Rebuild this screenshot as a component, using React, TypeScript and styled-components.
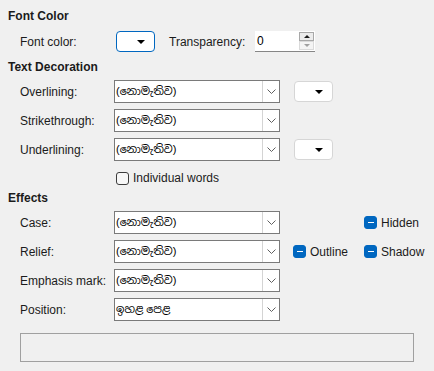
import React from 'react';
import styled, { createGlobalStyle } from 'styled-components';

const GlobalStyle = createGlobalStyle`
  html, body {
    margin: 0;
    padding: 0;
    background: #f0f0f0;
  }
`;

const Page = styled.div`
  width: 434px;
  height: 371px;
  box-sizing: border-box;
  padding: 8px 0 0 8px;
  background: #f0f0f0;
  font-family: 'Segoe UI', 'Liberation Sans', 'Noto Sans Sinhala', 'Noto Sans', sans-serif;
  font-size: 12px;
  color: #1b1b1b;
  overflow: hidden;
`;

const Title = styled.div<{ $top?: number }>`
  font-weight: 700;
  height: 17px;
  line-height: 17px;
  margin-top: ${(p) => p.$top ?? 0}px;
`;

const Rows = styled.div<{ $top?: number }>`
  display: flex;
  flex-direction: column;
  gap: 6px;
  margin-top: ${(p) => p.$top ?? 0}px;
`;

const Row = styled.div<{ $h?: number; $top?: number }>`
  display: flex;
  align-items: center;
  height: ${(p) => p.$h ?? 23}px;
  margin-top: ${(p) => p.$top ?? 0}px;
  padding-left: 12px;
`;

const Label = styled.span<{ $w?: number }>`
  flex: none;
  width: ${(p) => p.$w ?? 94}px;
  white-space: nowrap;
`;

const Combo = styled.div`
  flex: none;
  display: flex;
  align-items: stretch;
  width: 166px;
  height: 23px;
  box-sizing: border-box;
  border: 1px solid #7a7a7a;
  background: #fff;
`;

const ComboText = styled.span`
  flex: 1;
  padding-left: 1px;
  font-size: 11px;
  line-height: 21px;
  color: #000;
  white-space: nowrap;
  overflow: hidden;
`;

const ComboButton = styled.span`
  flex: none;
  width: 16px;
  display: flex;
  align-items: center;
  justify-content: center;
  border-left: 1px solid #d4d4d4;
  background: #fff;
`;

const ColorButton = styled.div<{ $focused?: boolean; $left?: number }>`
  flex: none;
  position: relative;
  width: 39px;
  height: 21px;
  box-sizing: border-box;
  margin-left: ${(p) => p.$left ?? 0}px;
  border: 1px solid ${(p) => (p.$focused ? '#0067c0' : '#d6d6d6')};
  border-radius: 4px;
  background: #fff;
  &::after {
    content: '';
    position: absolute;
    right: 9px;
    top: 8px;
    border-left: 4px solid transparent;
    border-right: 4px solid transparent;
    border-top: 4px solid #000;
  }
`;

const Spin = styled.div`
  flex: none;
  display: flex;
  width: 60px;
  height: 21px;
  box-sizing: border-box;
  border-bottom: 1px solid #868686;
  background: #fff;
`;

const SpinValue = styled.span`
  flex: 1;
  padding-left: 2px;
  line-height: 20px;
  color: #000;
`;

const SpinButtons = styled.div`
  flex: none;
  display: flex;
  flex-direction: column;
  width: 15px;
  padding: 1px 1px 1px 0;
`;

const SpinButton = styled.span<{ $up?: boolean }>`
  flex: 1;
  display: flex;
  align-items: center;
  justify-content: center;
  box-sizing: border-box;
  border: 1px solid ${(p) => (p.$up ? '#a8a8a8' : '#dadada')};
  background: ${(p) => (p.$up ? '#ececec' : '#f4f4f4')};
  &::after {
    content: '';
    border-left: 3px solid transparent;
    border-right: 3px solid transparent;
    ${(p) =>
      p.$up
        ? 'border-bottom: 3px solid #1b1b1b;'
        : 'border-top: 3px solid #a0a0a0;'}
  }
`;

const Extras = styled.div<{ $left?: number }>`
  display: grid;
  grid-template-columns: 71px auto;
  align-items: center;
  margin-left: ${(p) => p.$left ?? 13}px;
`;

const Check = styled.label`
  display: flex;
  align-items: center;
  gap: 4px;
  white-space: nowrap;
`;

const Box = styled.span<{ $mixed?: boolean }>`
  flex: none;
  display: flex;
  align-items: center;
  justify-content: center;
  width: 13px;
  height: 13px;
  box-sizing: border-box;
  border-radius: 3px;
  border: 1px solid ${(p) => (p.$mixed ? '#0067c0' : '#3c3c3c')};
  background: ${(p) => (p.$mixed ? '#0067c0' : '#f7f7f7')};
  &::after {
    content: '';
    display: ${(p) => (p.$mixed ? 'block' : 'none')};
    width: 6px;
    height: 1.5px;
    background: #fff;
  }
`;

const Preview = styled.div`
  margin: 12px 0 0 12px;
  width: 394px;
  height: 29px;
  box-sizing: border-box;
  border: 1px solid #a0a0a0;
  background: #f0f0f0;
`;

const Chevron = () => (
  <svg width="9" height="5" viewBox="0 0 9 5">
    <polyline points="0.5,0.5 4.5,4.5 8.5,0.5" fill="none" stroke="#606060" strokeWidth="1" />
  </svg>
);

const Select = ({ value }: { value: string }) => (
  <Combo>
    <ComboText>{value}</ComboText>
    <ComboButton>
      <Chevron />
    </ComboButton>
  </Combo>
);

const NONE = '(නොමැතිව)';

export default function App() {
  return (
    <>
      <GlobalStyle />
      <Page>
        <Title>Font Color</Title>
        <Row $h={21} $top={6}>
          <Label $w={96}>Font color:</Label>
          <ColorButton $focused />
          <Label $w={86} style={{ marginLeft: 14 }}>
            Transparency:
          </Label>
          <Spin>
            <SpinValue>0</SpinValue>
            <SpinButtons>
              <SpinButton $up />
              <SpinButton />
            </SpinButtons>
          </Spin>
        </Row>

        <Title $top={7}>Text Decoration</Title>
        <Rows $top={4}>
          <Row>
            <Label>Overlining:</Label>
            <Select value={NONE} />
            <ColorButton $left={14} />
          </Row>
          <Row>
            <Label>Strikethrough:</Label>
            <Select value={NONE} />
          </Row>
          <Row>
            <Label>Underlining:</Label>
            <Select value={NONE} />
            <ColorButton $left={14} />
          </Row>
        </Rows>
        <Row $h={16} $top={9}>
          <Label />
          <Check style={{ marginLeft: 2 }}>
            <Box />
            Individual words
          </Check>
        </Row>

        <Title $top={4}>Effects</Title>
        <Rows $top={4}>
          <Row>
            <Label>Case:</Label>
            <Select value={NONE} />
            <Extras>
              <span />
              <Check>
                <Box $mixed />
                Hidden
              </Check>
            </Extras>
          </Row>
          <Row>
            <Label>Relief:</Label>
            <Select value={NONE} />
            <Extras>
              <Check>
                <Box $mixed />
                Outline
              </Check>
              <Check>
                <Box $mixed />
                Shadow
              </Check>
            </Extras>
          </Row>
          <Row>
            <Label>Emphasis mark:</Label>
            <Select value={NONE} />
          </Row>
          <Row>
            <Label>Position:</Label>
            <Select value="ඉහළ පෙළ" />
          </Row>
        </Rows>
        <Preview />
      </Page>
    </>
  );
}
